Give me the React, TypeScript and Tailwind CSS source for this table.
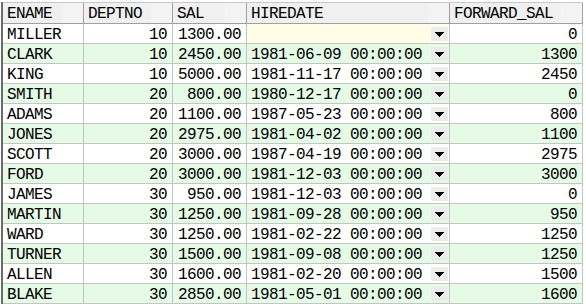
import React from 'react';

type Row = [string, number, string, string, number];

const rows: Row[] = [
  ['MILLER', 10, '1300.00', '', 0],
  ['CLARK', 10, '2450.00', '1981-06-09 00:00:00', 1300],
  ['KING', 10, '5000.00', '1981-11-17 00:00:00', 2450],
  ['SMITH', 20, '800.00', '1980-12-17 00:00:00', 0],
  ['ADAMS', 20, '1100.00', '1987-05-23 00:00:00', 800],
  ['JONES', 20, '2975.00', '1981-04-02 00:00:00', 1100],
  ['SCOTT', 20, '3000.00', '1987-04-19 00:00:00', 2975],
  ['FORD', 20, '3000.00', '1981-12-03 00:00:00', 3000],
  ['JAMES', 30, '950.00', '1981-12-03 00:00:00', 0],
  ['MARTIN', 30, '1250.00', '1981-09-28 00:00:00', 950],
  ['WARD', 30, '1250.00', '1981-02-22 00:00:00', 1250],
  ['TURNER', 30, '1500.00', '1981-09-08 00:00:00', 1250],
  ['ALLEN', 30, '1600.00', '1981-02-20 00:00:00', 1500],
  ['BLAKE', 30, '2850.00', '1981-05-01 00:00:00', 1600],
];

const columns = [
  { name: 'ENAME', w: 'w-[81px]' },
  { name: 'DEPTNO', w: 'w-[89px]' },
  { name: 'SAL', w: 'w-[74px]' },
  { name: 'HIREDATE', w: 'w-[203px]' },
  { name: 'FORWARD_SAL', w: 'w-[133px]' },
];

const cell = 'h-[20px] shrink-0 border-r border-b border-[#c4c4c4] overflow-hidden whitespace-nowrap';
const txt = 'pt-[2px] leading-[19px]';

const DropButton = () => (
  <div className="mt-[3px] mr-[1px] w-[17px] h-[14px] shrink-0 bg-[#ececec] flex items-center justify-center">
    <svg width="9" height="5" viewBox="0 0 9 5" shapeRendering="crispEdges">
      <polygon points="0,0 9,0 4.5,5" fill="#000" />
    </svg>
  </div>
);

export default function App() {
  return (
    <div className="w-[586px] h-[308px] bg-white overflow-hidden text-[16px] tracking-[-0.6px] text-black" style={{ fontFamily: '"Liberation Mono", monospace' }}>
      <div className="h-[2px]" />
      <div className="flex">
        <div className="w-[1px] shrink-0" />
        <div className="w-[2px] shrink-0 bg-[#6b6b6b]" />
        <div className="flex flex-col">
          <div className="flex border-t border-[#c8c8c8]">
            {columns.map(c => (
              <div key={c.name} className={`${c.w} h-[21px] shrink-0 flex bg-[#f0f0f0] border-r border-b border-[#a0a0a0]`}>
                <div className={`flex-1 pl-[4px] ${txt}`}>{c.name}</div>
                <div className="w-[21px] bg-[#f3f3f3]" />
              </div>
            ))}
          </div>
          {rows.map((r, i) => {
            const bg = i % 2 === 1 ? 'bg-[#e5fbe5]' : 'bg-white';
            return (
              <div key={r[0]} className={`flex ${bg}`}>
                <div className={`${cell} w-[81px] pl-[4px] ${txt}`}>{r[0]}</div>
                <div className={`${cell} w-[89px] pr-[5px] text-right ${txt}`}>{r[1]}</div>
                <div className={`${cell} w-[74px] pr-[5px] text-right ${txt}`}>{r[2]}</div>
                <div className={`${cell} w-[203px] flex ${i === 0 ? 'bg-[#fffde6]' : ''}`}>
                  <div className={`flex-1 pl-[4px] ${txt}`}>{r[3]}</div>
                  <DropButton />
                </div>
                <div className={`${cell} w-[133px] pr-[5px] text-right ${txt}`}>{r[4]}</div>
              </div>
            );
          })}
        </div>
      </div>
    </div>
  );
}
